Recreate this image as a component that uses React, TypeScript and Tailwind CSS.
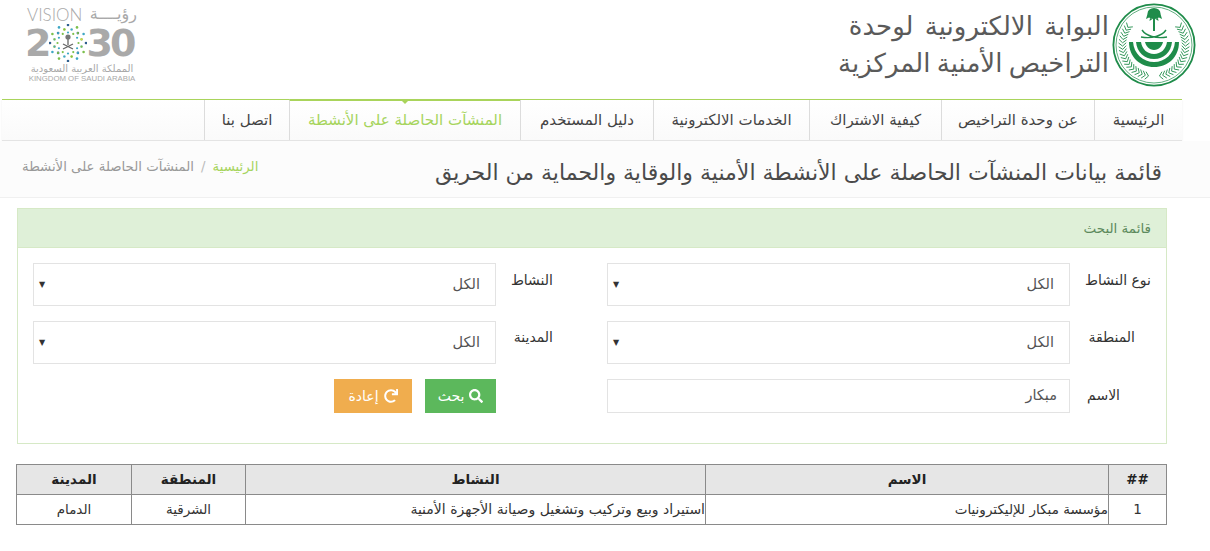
import React from 'react';
import { FaSearch, FaRedo } from 'react-icons/fa';

const FONT = "font-['DejaVu_Sans','Noto_Sans',sans-serif]";

const tabs = ['الرئيسية', 'عن وحدة التراخيص', 'كيفية الاشتراك', 'الخدمات الالكترونية', 'دليل المستخدم', 'المنشآت الحاصلة على الأنشطة', 'اتصل بنا'];
const tabWidths = ['w-[88px]', 'w-[153px]', 'w-[132px]', 'w-[156px]', 'w-[133px]', 'w-[231px]', 'w-[85px]'];

const GREEN = '#1f8c4a';

// leaves of the wreath, along an arc round the seal's centre
const wreath: number[] = [];
for (let a = 100; a <= 215; a += 6) wreath.push(a);

const Leaves = ({ flip }: { flip: boolean }) => (
  <g transform={flip ? 'translate(84 0) scale(-1 1)' : undefined} stroke={GREEN} strokeWidth="0.9">
    {wreath.map((a) => {
      const r = (a * Math.PI) / 180;
      const x = 42 + 31.5 * Math.cos(r);
      const y = 42 + 31.5 * Math.sin(r);
      // each leaf leans forward, up the stem
      const t = r + 0.7;
      const t2 = r - 0.7 + Math.PI;
      return (
        <g key={a}>
          <line x1={x} y1={y} x2={x + 5 * Math.cos(t)} y2={y + 5 * Math.sin(t)} />
          <line x1={x} y1={y} x2={x + 5 * Math.cos(t2)} y2={y + 5 * Math.sin(t2)} />
        </g>
      );
    })}
  </g>
);

const Seal = () => (
  <svg width="84" height="84" viewBox="0 0 84 84" fill="none">
    <circle cx="42" cy="42" r="40.6" stroke={GREEN} strokeWidth="1.8" />
    <circle cx="42" cy="42" r="38" stroke={GREEN} strokeWidth="0.7" />
    <Leaves flip={false} />
    <Leaves flip={true} />
    {/* palm */}
    <path d="M41 15h2v13h-2z" fill={GREEN} />
    <ellipse cx="42" cy="10.5" rx="6.5" ry="5.5" fill={GREEN} />
    <path d="M35.5 11l-1.5 5 5-2.5zM48.5 11l1.5 5-5-2.5zM38 15l-.5 3 3-2zM46 15l.5 3-3-2z" fill={GREEN} />
    {/* swords */}
    <path d="M30 27c4 6 14 9 25 7M54 27c-4 6-14 9-25 7" stroke={GREEN} strokeWidth="1.4" />
    {/* crescents */}
    <path d="M17 39h50c0 15-11 25-25 25s-25-10-25-25z" fill={GREEN} />
    <path d="M21 39h42c-1 12-10 20-21 20s-20-8-21-20z" fill="#fff" />
    <path d="M24 39h36c-1 10-8 17-18 17s-17-7-18-17z" fill={GREEN} />
    <path d="M29 39h26c-1 7-6 12-13 12s-12-5-13-12z" fill="#fff" />
    <path d="M33 39h18c-1 4-4 8-9 8s-8-4-9-8z" fill={GREEN} />
  </svg>
);

const starDots = [0, 30, 60, 90, 120, 150, 180, 210, 240, 270, 300, 330];
const StarDots = () => (
  <svg width="38" height="38" viewBox="0 0 38 38" className="shrink-0">
    {starDots.map((a, i) => {
      const r = (a * Math.PI) / 180;
      return (
        <g key={a}>
          <circle cx={19 + 18 * Math.cos(r)} cy={19 + 18 * Math.sin(r)} r="1.3" fill={i % 3 === 0 ? '#2f5f8f' : i % 3 === 1 ? '#7cc04b' : '#3fa7c4'} />
          <circle cx={19 + 14 * Math.cos(r + 0.26)} cy={19 + 14 * Math.sin(r + 0.26)} r="1.3" fill={i % 3 === 0 ? '#9bd0d8' : i % 3 === 1 ? '#2f5f8f' : '#c9d64a'} />
          <circle cx={19 + 14 * Math.cos(r - 0.26)} cy={19 + 14 * Math.sin(r - 0.26)} r="1.1" fill={i % 2 === 0 ? '#3fa7c4' : '#7cc04b'} />
          <circle cx={19 + 10.5 * Math.cos(r)} cy={19 + 10.5 * Math.sin(r)} r="1.1" fill={i % 2 === 0 ? '#7cc04b' : '#3fa7c4'} />
        </g>
      );
    })}
    <path d="M19 13v8M14 25l10-5M24 25l-10-5" stroke="#666" strokeWidth="1.3" />
    <circle cx="19" cy="13" r="2.6" fill="#777" />
  </svg>
);

const Select = () => (
  <div className="w-[463px] h-[43px] border border-[#e3e3e3] bg-white flex items-center justify-between pr-[15px] pl-[5px] text-[14.5px] text-[#555]">
    <span>الكل</span>
    <span className="text-[8px] text-[#333] leading-none">▼</span>
  </div>
);

const label = 'text-[14px] text-[#333]';
const th = 'border border-[#8a8a8a] font-bold text-[13.5px] text-[#222] text-center';
const td = 'border border-[#8a8a8a] text-[#333]';

const App: React.FC = () => {
  return (
    <div dir="rtl" className={`${FONT} w-[1210px] h-[551px] bg-white overflow-hidden`}>
      {/* Header */}
      <header className="h-[99px] flex justify-between">
        <div className="flex items-start">
          <div className="mr-[14px] mt-[3px]"><Seal /></div>
          <h1 className="mr-[3px] mt-[8px] text-[26px] leading-[37px] text-[#5a5a5a] font-normal">
            <span className="[word-spacing:3px]">البوابة الالكترونية لوحدة</span>
            <br />
            <span className="[word-spacing:-2px]">التراخيص الأمنية المركزية</span>
          </h1>
        </div>
        <div dir="ltr" className="ml-[27px] w-[110px] text-[#a9a9a9]">
          <div className="flex justify-between items-center h-[20px] mt-[4px] leading-none">
            <span className="text-[17px] font-light font-['Lato',sans-serif]">VISION</span>
            <span className="text-[16px] font-['DejaVu_Sans',sans-serif]">رؤيــــة</span>
          </div>
          <div className="flex items-center h-[38px] text-[38px] font-bold leading-none font-['DejaVu_Sans',sans-serif]">
            <span className="-ml-[2px] -mr-[2px]">2</span>
            <StarDots />
            <span className="-ml-[1px] tracking-[-3px]">30</span>
          </div>
          <div className="text-center text-[10px] leading-[11px] mt-[1px] font-['DejaVu_Sans',sans-serif] whitespace-nowrap">المملكة العربية السعودية</div>
          <div className="text-[7.8px] leading-[9px] text-center whitespace-nowrap font-['Liberation_Sans',sans-serif]">KINGDOM OF SAUDI ARABIA</div>
        </div>
      </header>

      {/* Nav */}
      <nav className="w-[1180px] ml-[2px] mr-[28px] flex h-[42px] border-t border-[#a9d45b] border-b border-b-[#e4e4e4] shadow-[0_1px_2px_#eee] bg-gradient-to-b from-white to-[#fafafa]">
        {tabs.map((t, i) => (
          <a
            key={t}
            className={`${tabWidths[i]} relative flex items-center justify-center text-[15px] whitespace-nowrap border-l border-[#dcdcdc] ${i === 5 ? 'text-[#a6d45c] border-t-2 -mt-px border-t-[#a9d45b]' : 'text-[#444]'}`}
          >
            {i === 5 && <span className="absolute top-0 left-1/2 -translate-x-1/2 border-x-[3px] border-x-transparent border-t-[3px] border-t-[#a9d45b]" />}
            {t}
          </a>
        ))}
      </nav>

      {/* Title bar */}
      <div className="h-[57px] bg-[#fcfcfc] border-b border-[#f0f0f0] flex justify-between pr-[48px] pl-[22px]">
        <h2 className="pt-[19px] text-[22px] leading-[26px] text-[#4a4a4a] font-normal whitespace-nowrap">قائمة بيانات المنشآت الحاصلة على الأنشطة الأمنية والوقاية والحماية من الحريق</h2>
        <div className="pt-[17px] text-[13.3px] leading-[18px] whitespace-nowrap text-[#999]">
          <span className="text-[#a6d45c]">الرئيسية</span>
          <span className="mx-[7px] text-[#bbb]">/</span>
          <span>المنشآت الحاصلة على الأنشطة</span>
        </div>
      </div>

      {/* Search panel */}
      <section className="mt-[10px] mr-[43px] ml-[17px] w-[1150px] h-[236px] border border-[#d6e9c6]">
        <div className="h-[39px] bg-[#dff0d8] border-b border-[#d6e9c6] flex items-center pr-[15px] text-[13.5px] text-[#5d8a5d]">قائمة البحث</div>
        <div className="pt-[15px] px-[15px] flex flex-col gap-[15px]">
          <div className="flex">
            <label className={`w-[81px] pt-[7px] ${label}`}>نوع النشاط</label>
            <Select />
            <label className={`w-[57px] mr-[54px] pt-[7px] ${label}`}>النشاط</label>
            <Select />
          </div>
          <div className="flex">
            <label className={`w-[81px] pt-[6px] pr-[16px] ${label}`}>المنطقة</label>
            <Select />
            <label className={`w-[57px] mr-[54px] pt-[6px] ${label}`}>المدينة</label>
            <Select />
          </div>
          <div className="flex">
            <label className={`w-[81px] pt-[6px] pr-[31px] ${label}`}>الاسم</label>
            <div className="w-[463px] h-[34px] border border-[#e3e3e3] flex items-center pr-[12px] text-[14.5px] text-[#555]">مبكار</div>
            <div className="w-[57px] mr-[54px]" />
            <div className="flex gap-[13px]">
              <button className="w-[71px] h-[34px] bg-[#5cb85c] text-white text-[14px] flex items-center justify-center gap-[5px]">
                <FaSearch size={14} />
                بحث
              </button>
              <button className="w-[78px] h-[34px] bg-[#f0ad4e] text-white text-[14px] flex items-center justify-center gap-[5px]">
                <FaRedo size={14} />
                إعادة
              </button>
            </div>
          </div>
        </div>
      </section>

      {/* Results */}
      <table className="mt-[20px] ml-[17px] mr-[43px] w-[1150px] table-fixed border-collapse">
        <colgroup>
          <col className="w-[58px]" />
          <col className="w-[403px]" />
          <col className="w-[460px]" />
          <col className="w-[114px]" />
          <col className="w-[115px]" />
        </colgroup>
        <thead>
          <tr className="h-[30px] bg-[#e6e6e6]">
            <th className={th}>##</th>
            <th className={th}>الاسم</th>
            <th className={th}>النشاط</th>
            <th className={th}>المنطقة</th>
            <th className={th}>المدينة</th>
          </tr>
        </thead>
        <tbody>
          <tr className="h-[30px]">
            <td className={`${td} text-[13.5px] text-center`}>1</td>
            <td className={`${td} text-[13.5px]`}>مؤسسة مبكار للإليكترونيات</td>
            <td className={`${td} text-[14px]`}>استيراد وبيع وتركيب وتشغيل وصيانة الأجهزة الأمنية</td>
            <td className={`${td} text-[13.5px] text-center`}>الشرقية</td>
            <td className={`${td} text-[13.5px] text-center`}>الدمام</td>
          </tr>
        </tbody>
      </table>
    </div>
  );
};

export default App;
